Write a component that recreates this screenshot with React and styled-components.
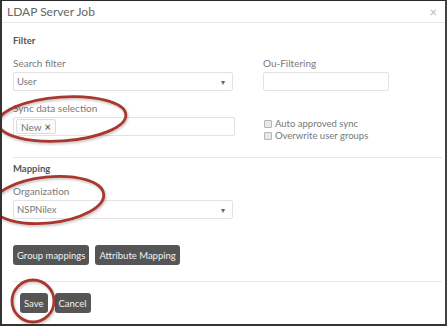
import React from 'react';
import styled, { createGlobalStyle } from 'styled-components';

// Reference screenshot of the LDAP job dialog, red marker circles included
const GlobalStyle = createGlobalStyle`
	html, body {
		margin: 0;
		background: #fff;
	}
	* {
		box-sizing: border-box;
	}
`;

const App = () => (
	<>
		<GlobalStyle />
		<Frame>
			<Header>
				<Title>LDAP Server Job</Title>
				<Close>×</Close>
			</Header>
			<Body>
				<Heading>Filter</Heading>
				<FieldGrid>
					<Field>
						<Label>Search filter</Label>
						<Select>
							<span>User</span>
							<Caret>▾</Caret>
						</Select>
					</Field>
					<Field>
						<Label>Ou-Filtering</Label>
						<Input $width={126} />
					</Field>
					<Field $top={11}>
						<Label>Sync data selection</Label>
						<TagInput>
							<Tag>
								New <TagX>×</TagX>
							</Tag>
						</TagInput>
					</Field>
					<Checks>
						<Check>
							<Box />
							Auto approved sync
						</Check>
						<Check>
							<Box />
							Overwrite user groups
						</Check>
					</Checks>
				</FieldGrid>
				<Divider $top={21} />
				<Heading $top={5}>Mapping</Heading>
				<Field $top={10}>
					<Label>Organization</Label>
					<Select $width={220}>
						<span>NSPNilex</span>
						<Caret>▾</Caret>
					</Select>
				</Field>
				<ButtonRow>
					<Button>Group mappings</Button>
					<Button>Attribute Mapping</Button>
				</ButtonRow>
				<Divider $top={16} />
				<Footer>
					<Button>Save</Button>
					<Button>Cancel</Button>
				</Footer>
			</Body>
			<Marks viewBox="0 0 447 326" width="447" height="326">
				<defs>
					<filter id="soft" x="-10%" y="-10%" width="120%" height="120%">
						<feDropShadow dx="1" dy="1.5" stdDeviation="1" floodColor="#000" floodOpacity="0.25" />
					</filter>
				</defs>
				<g fill="none" stroke="#a8382f" strokeWidth="2.8" filter="url(#soft)">
					<ellipse cx="62" cy="119" rx="64" ry="22" transform="rotate(-4 62 119)" />
					<ellipse cx="48" cy="200" rx="56" ry="23" transform="rotate(-6 48 200)" />
					<ellipse cx="33" cy="301" rx="21" ry="21" />
				</g>
			</Marks>
		</Frame>
	</>
);

export default App;

// Styled components
const Frame = styled.div`
	position: relative;
	width: 447px;
	height: 326px;
	border-top: 1px solid #2a2a2a;
	border-left: 2px solid #333;
	border-right: 2px solid #444;
	border-bottom: 2px solid #333;
	font-family: Lato, 'Open Sans', sans-serif;
	color: #777;
	overflow: hidden;
`;

const Header = styled.div`
	height: 22px;
	display: flex;
	align-items: center;
	justify-content: space-between;
	padding: 0 8px 0 5px;
	border-bottom: 1px solid #e6e6e6;
`;

const Title = styled.div`
	font-size: 12px;
	color: #666;
`;

const Close = styled.div`
	font-size: 13px;
	color: #bbb;
`;

const Body = styled.div`
	padding: 12px 3px 0 11px;
`;

const Heading = styled.div`
	margin-top: ${p => p.$top || 0}px;
	font-size: 9.5px;
	line-height: 12px;
	font-weight: bold;
	color: #555;
`;

const FieldGrid = styled.div`
	display: grid;
	grid-template-columns: 222px 1fr;
	column-gap: 28px;
	margin-top: 10px;
`;

const Field = styled.div`
	margin-top: ${p => p.$top || 0}px;
	display: flex;
	flex-direction: column;
	gap: 3px;
`;

const Label = styled.div`
	font-size: 10px;
	line-height: 12px;
	color: #7a7a7a;
`;

const Control = styled.div`
	height: 19px;
	border: 1px solid #e2e2e2;
	border-radius: 2px;
	background: #fff;
`;

const Select = styled(Control)`
	width: ${p => p.$width || 220}px;
	display: flex;
	align-items: center;
	justify-content: space-between;
	padding: 0 7px 0 3px;
	font-size: 9.5px;
	color: #777;
`;

const Caret = styled.span`
	font-size: 8px;
	color: #666;
`;

const Input = styled(Control)`
	width: ${p => p.$width}px;
`;

const TagInput = styled(Control)`
	width: 222px;
	display: flex;
	align-items: center;
	padding-left: 2px;
`;

const Tag = styled.span`
	display: inline-flex;
	align-items: center;
	gap: 3px;
	height: 15px;
	padding: 0 4px;
	border: 1px solid #ddd;
	border-radius: 2px;
	background: #fafafa;
	font-size: 10px;
	color: #777;
`;

const TagX = styled.span`
	font-size: 11px;
	color: #444;
	line-height: 1;
`;

const Checks = styled.div`
	display: flex;
	flex-direction: column;
	gap: 1px;
	padding: 27px 0 0 1px;
	margin-bottom: -6px;
`;

const Check = styled.div`
	display: flex;
	align-items: center;
	gap: 3px;
	font-size: 9.5px;
	line-height: 11px;
	color: #777;
`;

const Box = styled.span`
	width: 8px;
	height: 8px;
	border: 1px solid #b5b5b5;
	border-radius: 1px;
	background: #e8e8e8;
`;

const Divider = styled.div`
	margin-top: ${p => p.$top}px;
	border-top: 1px solid #e6e6e6;
`;

const ButtonRow = styled.div`
	display: flex;
	gap: 6px;
	margin-top: 26px;
`;

const Footer = styled.div`
	display: flex;
	gap: 7px;
	margin-top: 11px;
	padding-left: 7px;
`;

const Button = styled.button`
	height: 20px;
	padding: 0 4px;
	border: none;
	border-radius: 3px;
	background: #555;
	color: #f2f2f2;
	font-family: Lato, 'Open Sans', sans-serif;
	font-size: 9.5px;
`;

const Marks = styled.svg`
	position: absolute;
	top: -1px;
	left: -2px;
	pointer-events: none;
`;
